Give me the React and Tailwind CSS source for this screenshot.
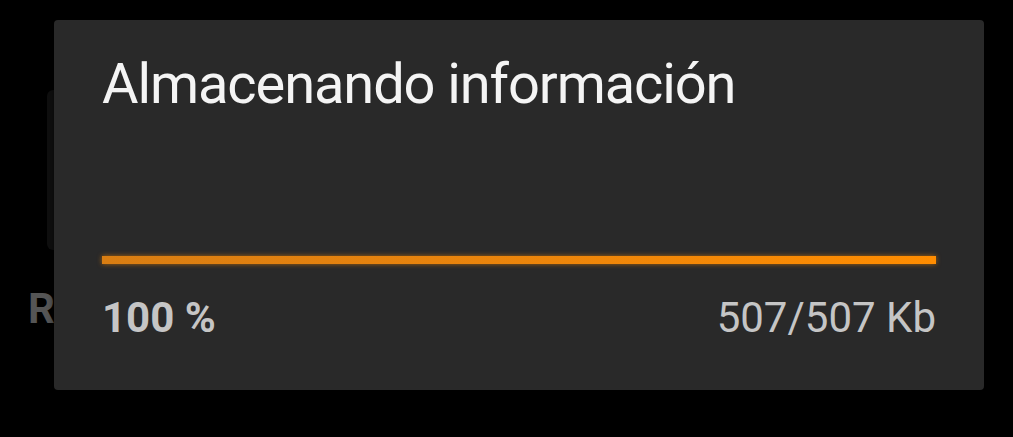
export default function App() {
  const done = 507;
  const total = 507;
  const pct = Math.round((done / total) * 100);

  return (
    <div className="relative h-[437px] w-[1013px] overflow-hidden bg-black font-['Roboto',sans-serif]">
      {/* screen behind the dialog */}
      <div className="absolute left-[47px] top-[90px] h-[160px] w-[40px] rounded-[6px] bg-[#0f0f0f]" />
      <div className="absolute left-[28px] top-[288px] text-[42px] font-bold leading-none text-[#555555]">R</div>

      <div className="absolute left-[54px] top-[20px] flex h-[370px] w-[930px] flex-col rounded-[4px] bg-[#292929] px-[48px] shadow-[0_2px_6px_rgba(0,0,0,0.6)]">
        <h2 className="mt-[31px] text-[56px] leading-[66px] font-normal tracking-[-1.1px] text-[#f4f4f4]">
          Almacenando información
        </h2>

        <div className="mt-[139px] h-[8px] w-full bg-[#3a3a3a]">
          <div
            className="h-full bg-gradient-to-r from-[#d97d12] to-[#ff8c00] shadow-[0_0_5px_rgba(255,140,0,0.6)]"
            style={{ width: `${pct}%` }}
          />
        </div>

        <div className="mt-[33px] flex items-baseline justify-between text-[42px] leading-none text-[#c5c5c5]">
          <span className="font-bold">{pct} %</span>
          <span>
            {done}/{total} Kb
          </span>
        </div>
      </div>
    </div>
  );
}
